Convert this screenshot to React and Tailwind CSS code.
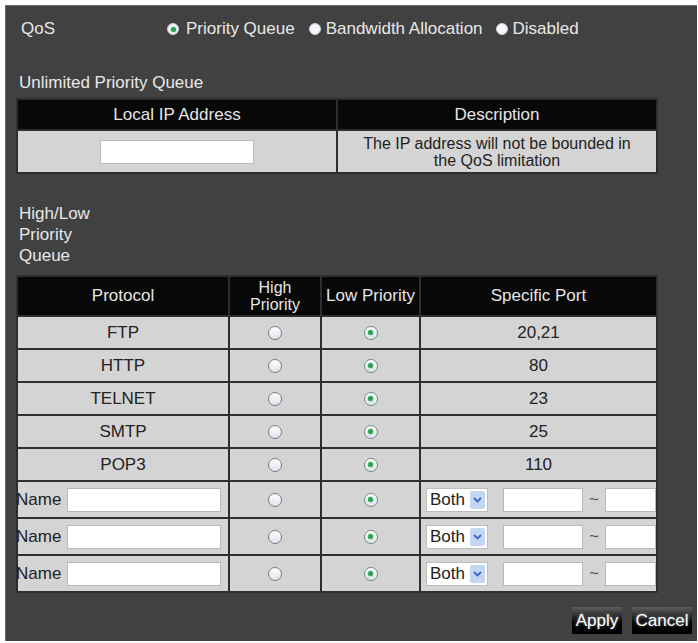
import React from "react";

function Radio({ checked, dark }) {
  return (
    <span
      className={
        "inline-flex items-center justify-center rounded-full border shrink-0 " +
        (dark
          ? "w-[12px] h-[12px] border-[#c8d0dc] bg-[#f4f6fa]"
          : "w-[14px] h-[14px] border-[1.5px] " +
            (checked ? "border-[#6f8f7a]" : "border-[#7a7a7a]") +
            " bg-[linear-gradient(#ffffff,#dde3ee)]")
      }
    >
      {checked && <span className="w-[5px] h-[5px] rounded-full bg-[#2e9e5b] shadow-[0_0_2px_#5c5]" />}
    </span>
  );
}

function TextBox({ className }) {
  return <span className={"block bg-white border border-[#b9b9b9] " + className} />;
}

function Select() {
  return (
    <span className="flex items-center w-[62px] h-[24px] bg-white border border-[#bdbdbd] pl-[3px] pr-[2px] justify-between">
      <span className="leading-none text-[#222]">Both</span>
      <span className="flex items-center justify-center w-[15px] h-[18px] bg-[#c4d6f2] rounded-[2px]">
        <svg width="9" height="6" viewBox="0 0 9 6">
          <path d="M1 1 L4.5 4.5 L8 1" fill="none" stroke="#3a66c4" strokeWidth="1.8" />
        </svg>
      </span>
    </span>
  );
}

const fixed = [
  ["FTP", "20,21"],
  ["HTTP", "80"],
  ["TELNET", "23"],
  ["SMTP", "25"],
  ["POP3", "110"],
];

export default function App() {
  return (
    <div className="bg-white w-[698px] h-[643px] overflow-hidden pt-[5px] pl-[5px] font-['Liberation_Sans',Arial,sans-serif] text-[17px]">
      <div className="w-[692px] h-[636px] bg-[#414141] pl-[10px] pt-[12px] border-l border-t border-[#6a6a6a]">
        {/* top row */}
        <div className="flex items-center h-[22px] text-[#e8e8e8]">
          <span className="w-[151px] pl-[5px]">QoS</span>
          <span className="flex items-center gap-[7px]">
            <Radio checked dark />
            <span>Priority Queue</span>
          </span>
          <span className="flex items-center gap-[5px] ml-[14px]">
            <Radio dark />
            <span>Bandwidth Allocation</span>
          </span>
          <span className="flex items-center gap-[5px] ml-[13px]">
            <Radio dark />
            <span>Disabled</span>
          </span>
        </div>

        <div className="mt-[32px] h-[22px] leading-[22px] pl-[3px] text-[#e8e8e8]">Unlimited Priority Queue</div>

        {/* table 1 */}
        <div className="mt-[4px] w-[642px] bg-[#2e2e2e] p-[2px] grid grid-cols-[318px_318px] gap-[2px]">
          <div className="h-[29px] bg-[#080808] text-[#e6e6e6] flex items-center justify-center">Local IP Address</div>
          <div className="h-[29px] bg-[#080808] text-[#e6e6e6] flex items-center justify-center">Description</div>
          <div className="h-[41px] bg-[#d4d4d4] flex items-center justify-center">
            <TextBox className="w-[154px] h-[24px]" />
          </div>
          <div className="h-[41px] bg-[#d4d4d4] flex flex-col items-center justify-center text-center text-[16px] leading-[17px] text-[#222]">
            <span>The IP address will not be bounded in</span>
            <span>the QoS limitation</span>
          </div>
        </div>

        <div className="mt-[29px] w-[100px] pl-[3px] leading-[21px] text-[#e8e8e8]">High/Low Priority Queue</div>

        {/* table 2 */}
        <div className="mt-[9px] w-[642px] bg-[#2e2e2e] p-[2px] grid grid-cols-[210px_90px_97px_235px] gap-[2px]">
          <div className="h-[38px] bg-[#080808] text-[#e6e6e6] flex items-center justify-center">Protocol</div>
          <div className="h-[38px] bg-[#080808] text-[#e6e6e6] flex flex-col items-center justify-center text-[16px] leading-[17px]">
            <span>High</span>
            <span>Priority</span>
          </div>
          <div className="h-[38px] bg-[#080808] text-[#e6e6e6] flex items-center justify-center">Low Priority</div>
          <div className="h-[38px] bg-[#080808] text-[#e6e6e6] flex items-center justify-center">Specific Port</div>

          {fixed.map(([p, port]) => (
            <React.Fragment key={p}>
              <div className="h-[31px] bg-[#d4d4d4] text-[#222] flex items-center justify-center">{p}</div>
              <div className="h-[31px] bg-[#d4d4d4] flex items-center justify-center">
                <Radio />
              </div>
              <div className="h-[31px] bg-[#d4d4d4] flex items-center justify-center">
                <Radio checked />
              </div>
              <div className="h-[31px] bg-[#d4d4d4] text-[#222] flex items-center justify-center">{port}</div>
            </React.Fragment>
          ))}

          {[0, 1, 2].map((i) => (
            <React.Fragment key={i}>
              <div className="h-[35px] bg-[#d4d4d4] text-[#222] flex items-center">
                <span className="w-[51px] -ml-[2px]">Name</span>
                <TextBox className="w-[154px] h-[24px]" />
              </div>
              <div className="h-[35px] bg-[#d4d4d4] flex items-center justify-center">
                <Radio />
              </div>
              <div className="h-[35px] bg-[#d4d4d4] flex items-center justify-center">
                <Radio checked />
              </div>
              <div className="h-[35px] bg-[#d4d4d4] text-[#222] flex items-center pl-[5px]">
                <Select />
                <TextBox className="ml-[15px] w-[80px] h-[24px]" />
                <span className="w-[22px] text-center text-[#555]">~</span>
                <TextBox className="w-[51px] h-[24px]" />
              </div>
            </React.Fragment>
          ))}
        </div>

        {/* buttons */}
        <div className="mt-[14px] flex justify-end gap-[10px] pr-[5px]">
          <button className="h-[27px] w-[50px] bg-[linear-gradient(#5e5e5e_0%,#2a2a2a_35%,#000_60%,#000_100%)] text-white [text-shadow:0_0_3px_#fff8] leading-none">
            Apply
          </button>
          <button className="h-[27px] w-[60px] bg-[linear-gradient(#5e5e5e_0%,#2a2a2a_35%,#000_60%,#000_100%)] text-white [text-shadow:0_0_3px_#fff8] leading-none">
            Cancel
          </button>
        </div>
      </div>
    </div>
  );
}
